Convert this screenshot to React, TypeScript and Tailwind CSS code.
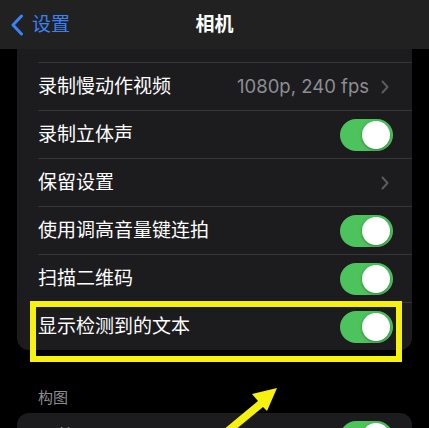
import React from "react";

const FONT = {
  fontFamily:
    '"Inter", "Noto Sans CJK SC", "Noto Sans", sans-serif',
};

function Toggle() {
  return (
    <div className="w-[53px] h-[32px] rounded-full bg-[#4cc35c] flex items-center justify-end pr-[3px]">
      <div className="w-[28px] h-[28px] rounded-full bg-white shadow-[0_1px_3px_rgba(0,0,0,0.35)]" />
    </div>
  );
}

function Chevron() {
  return (
    <svg width="8" height="14" viewBox="0 0 8 14" className="shrink-0">
      <path
        d="M1.5 1.5 L6.5 7 L1.5 12.5"
        fill="none"
        stroke="#5b5b60"
        strokeWidth="2"
        strokeLinecap="round"
        strokeLinejoin="round"
      />
    </svg>
  );
}

function Row({
  label,
  right,
}: {
  label: string;
  right: React.ReactNode;
}) {
  return (
    <div className="h-[48px] pl-[21px] flex">
      <div className="flex-1 border-t border-[#36363a] flex items-center justify-between">
        <span className="text-white text-[19px] leading-none">{label}</span>
        {right}
      </div>
    </div>
  );
}

export default function App() {
  return (
    <div
      className="relative w-[429px] h-[428px] overflow-hidden bg-black"
      style={FONT}
    >
      {/* Nav bar */}
      <div className="h-[49px] bg-[#212121] grid grid-cols-[1fr_auto_1fr] items-center">
        <div className="flex items-center pl-[10px] gap-[8px]">
          <svg width="14" height="22" viewBox="0 0 14 22">
            <path
              d="M11.5 2 L3 11 L11.5 20"
              fill="none"
              stroke="#3b82f6"
              strokeWidth="3"
              strokeLinecap="round"
              strokeLinejoin="round"
            />
          </svg>
          <span className="text-[#3a82f6] text-[19px] leading-none">设置</span>
        </div>
        <div className="text-white text-[19px] font-bold leading-none">相机</div>
        <div />
      </div>

      {/* Main card */}
      <div className="mx-[17px] bg-[#1c1c1e] rounded-b-[12px] pt-[13px]">
        <Row
          label="录制慢动作视频"
          right={
            <div className="flex items-center gap-[12px] pr-[23px]">
              <span className="text-[#8d8d92] text-[18.5px] leading-none">
                1080p, 240 fps
              </span>
              <Chevron />
            </div>
          }
        />
        <Row
          label="录制立体声"
          right={
            <div className="pr-[19px]">
              <Toggle />
            </div>
          }
        />
        <Row
          label="保留设置"
          right={
            <div className="pr-[23px]">
              <Chevron />
            </div>
          }
        />
        <Row
          label="使用调高音量键连拍"
          right={
            <div className="pr-[19px]">
              <Toggle />
            </div>
          }
        />
        <Row
          label="扫描二维码"
          right={
            <div className="pr-[19px]">
              <Toggle />
            </div>
          }
        />
        <Row
          label="显示检测到的文本"
          right={
            <div className="pr-[19px]">
              <Toggle />
            </div>
          }
        />
      </div>

      {/* Section header */}
      <div className="pl-[38px] pt-[38px] pb-[5px] text-[#8d8d92] text-[15px] leading-[20px]">
        构图
      </div>

      {/* Next card */}
      <div className="mx-[17px] bg-[#1c1c1e] rounded-t-[12px]">
        <div className="h-[48px] pl-[21px] pr-[19px] flex items-center justify-between">
          <span className="text-white text-[19px] leading-none">网格</span>
          <Toggle />
        </div>
      </div>

      {/* Yellow highlight box */}
      <div className="absolute left-[30px] top-[301px] w-[372px] h-[61px] border-[6px] border-[#f6f10f]" />

      {/* Arrow */}
      <svg
        className="absolute left-0 top-0"
        width="429"
        height="428"
        viewBox="0 0 429 428"
      >
        <polygon
          points="277,388 252,394 258,401 211,440 223,440 263,407 267,411"
          fill="#f6f10f"
        />
      </svg>
    </div>
  );
}
